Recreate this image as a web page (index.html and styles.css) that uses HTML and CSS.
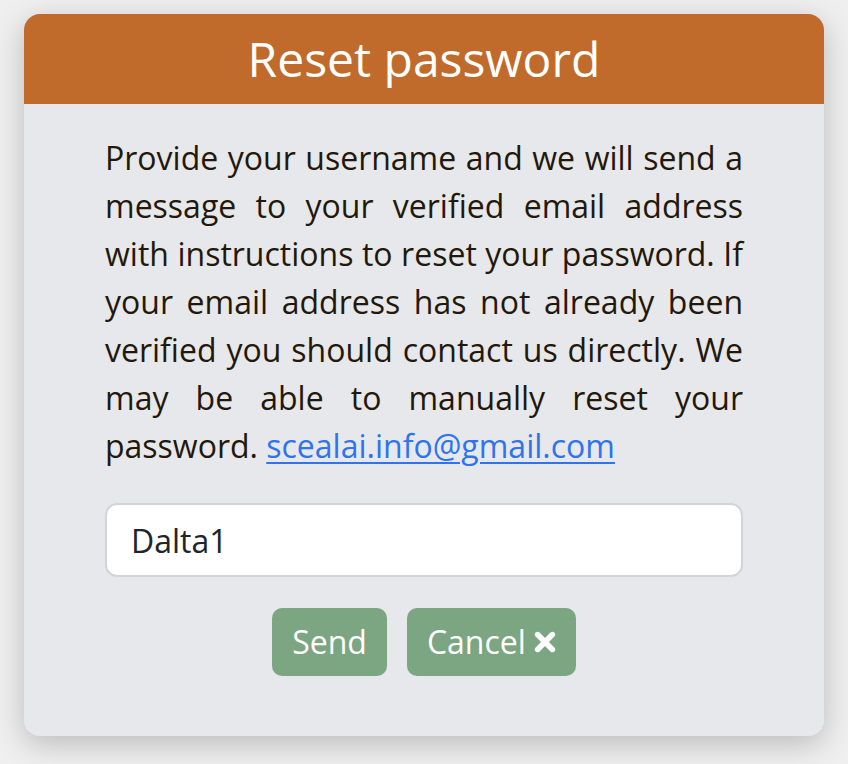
FILE: index.html
```html
<!DOCTYPE html>
<html lang="en">
<head>
<meta charset="utf-8">
<title>Reset password</title>
<link rel="stylesheet" href="styles.css">
</head>
<body>
<div class="page">
  <div class="card">
    <div class="card-header">Reset password</div>
    <div class="card-body">
      <p class="intro">Provide your username and we will send a message to your verified email address with instructions to reset your password. If your email address has not already been verified you should contact us directly. We may be able to manually reset your password. <a href="#" class="mail">scealai.info@gmail.com</a></p>
      <input class="field" type="text" value="Dalta1">
      <div class="actions">
        <button class="btn" type="button">Send</button>
        <button class="btn" type="button">Cancel <svg class="x-icon" viewBox="0 0 22 22" aria-hidden="true"><path d="M3.6 3.6 L18.4 18.4 M18.4 3.6 L3.6 18.4" stroke="#fff" stroke-width="5.6" stroke-linecap="round" fill="none"/></svg></button>
      </div>
    </div>
  </div>
</div>
</body>
</html>
```

FILE: styles.css
```css
html, body {
  margin: 0;
  padding: 0;
}
body {
  background: #efefef;
  font-family: "Open Sans", "Noto Sans", sans-serif;
  width: 848px;
  height: 764px;
  overflow: hidden;
}
.page {
  padding: 14px 24px 0 24px;
}
.card {
  width: 800px;
  height: 722px;
  border-radius: 16px;
  overflow: hidden;
  background: #e7e8eb;
  box-shadow: 0 8px 30px rgba(0, 0, 0, 0.22);
  display: flex;
  flex-direction: column;
}
.card-header {
  background: #c06b2b;
  color: #ffffff;
  font-size: 48px;
  line-height: 57.6px;
  padding: 16px 0;
  height: 90px;
  box-sizing: border-box;
  text-align: center;
}
.card-body {
  flex: 1;
  background: #e7e8eb;
  padding: 30px 81px 0 81px;
  display: flex;
  flex-direction: column;
}
.intro {
  margin: 0;
  font-size: 32px;
  line-height: 48px;
  color: #231809;
  text-align: justify;
}
.mail {
  color: #2d74ee;
  text-decoration: underline;
  text-decoration-thickness: 2px;
  text-underline-offset: 4px;
}
.field {
  margin-top: 33px;
  height: 74px;
  box-sizing: border-box;
  width: 638px;
  border: 2px solid #d1d5da;
  border-radius: 12px;
  background: #ffffff;
  padding: 0 24px;
  font-family: "Open Sans", "Noto Sans", sans-serif;
  font-size: 32px;
  color: #212529;
  outline: none;
}
.actions {
  margin-top: 31px;
  display: flex;
  justify-content: center;
  gap: 20px;
}
.btn {
  background: #7ca582;
  color: #ffffff;
  border: none;
  border-radius: 10px;
  height: 68px;
  padding: 0 20px;
  font-family: "Open Sans", "Noto Sans", sans-serif;
  font-size: 32px;
  line-height: 48px;
  display: flex;
  align-items: center;
  gap: 8px;
}
.x-icon {
  width: 22px;
  height: 22px;
  display: block;
}
```
